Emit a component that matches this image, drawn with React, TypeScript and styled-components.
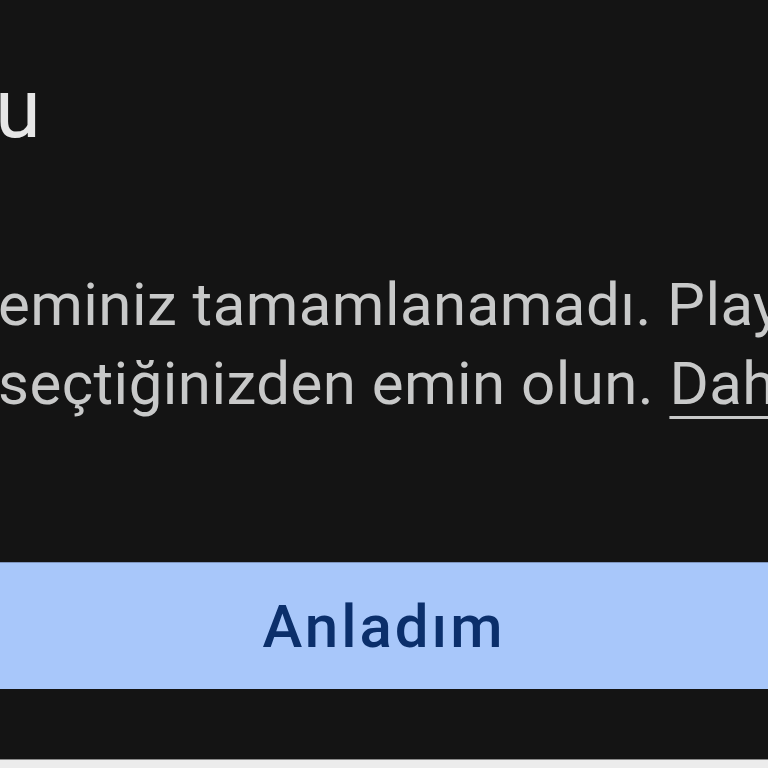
import styled, { createGlobalStyle } from "styled-components"

const GlobalStyle = createGlobalStyle`
  html, body {
    margin: 0;
    padding: 0;
    background: #141414;
  }
  body {
    font-family: Roboto, "Noto Sans", "Liberation Sans", sans-serif;
  }
`

const Screen = styled.div`
  width: 768px;
  height: 768px;
  overflow: hidden;
  background: #141414;
  display: flex;
  flex-direction: column;
`

const Dialog = styled.div`
  flex: 1;
  display: flex;
  flex-direction: column;
  padding-top: 59px;
`

const Title = styled.h2`
  margin: 0 0 0 -5px;
  font-size: 83px;
  line-height: 100px;
  font-weight: 400;
  color: #e6e6e6;
  white-space: nowrap;
`

const Body = styled.p`
  margin: 106px 0 0 -2px;
  font-size: 60px;
  line-height: 79px;
  font-weight: 400;
  letter-spacing: 0.45px;
  color: #c8c9c9;
  white-space: nowrap;
`

const Link = styled.span`
  text-decoration: underline;
  text-decoration-thickness: 3px;
  text-underline-offset: 12px;
`

const Actions = styled.div`
  margin-top: 139px;
`

const Button = styled.button`
  width: 100%;
  height: 127px;
  border: none;
  border-top: 1px solid #7f95bd;
  background: #a8c7fa;
  color: #0b2f6b;
  padding: 0;
  font-family: Roboto, "Noto Sans", sans-serif;
  font-size: 60px;
  font-weight: 500;
  letter-spacing: 3px;
  display: flex;
  align-items: center;
  justify-content: center;
`

const BottomEdge = styled.div`
  height: 8px;
  background: #ececec;
  border-top: 1px solid #8a8a8a;
`

export default function App() {
  return (
    <>
      <GlobalStyle />
      <Screen>
        <Dialog>
          <Title>u</Title>
          <Body>
            eminiz tamamlanamadı. Play
            <br />
            seçtiğinizden emin olun. <Link>Daha</Link>
          </Body>
          <Actions>
            <Button>Anladım</Button>
          </Actions>
        </Dialog>
        <BottomEdge />
      </Screen>
    </>
  )
}
